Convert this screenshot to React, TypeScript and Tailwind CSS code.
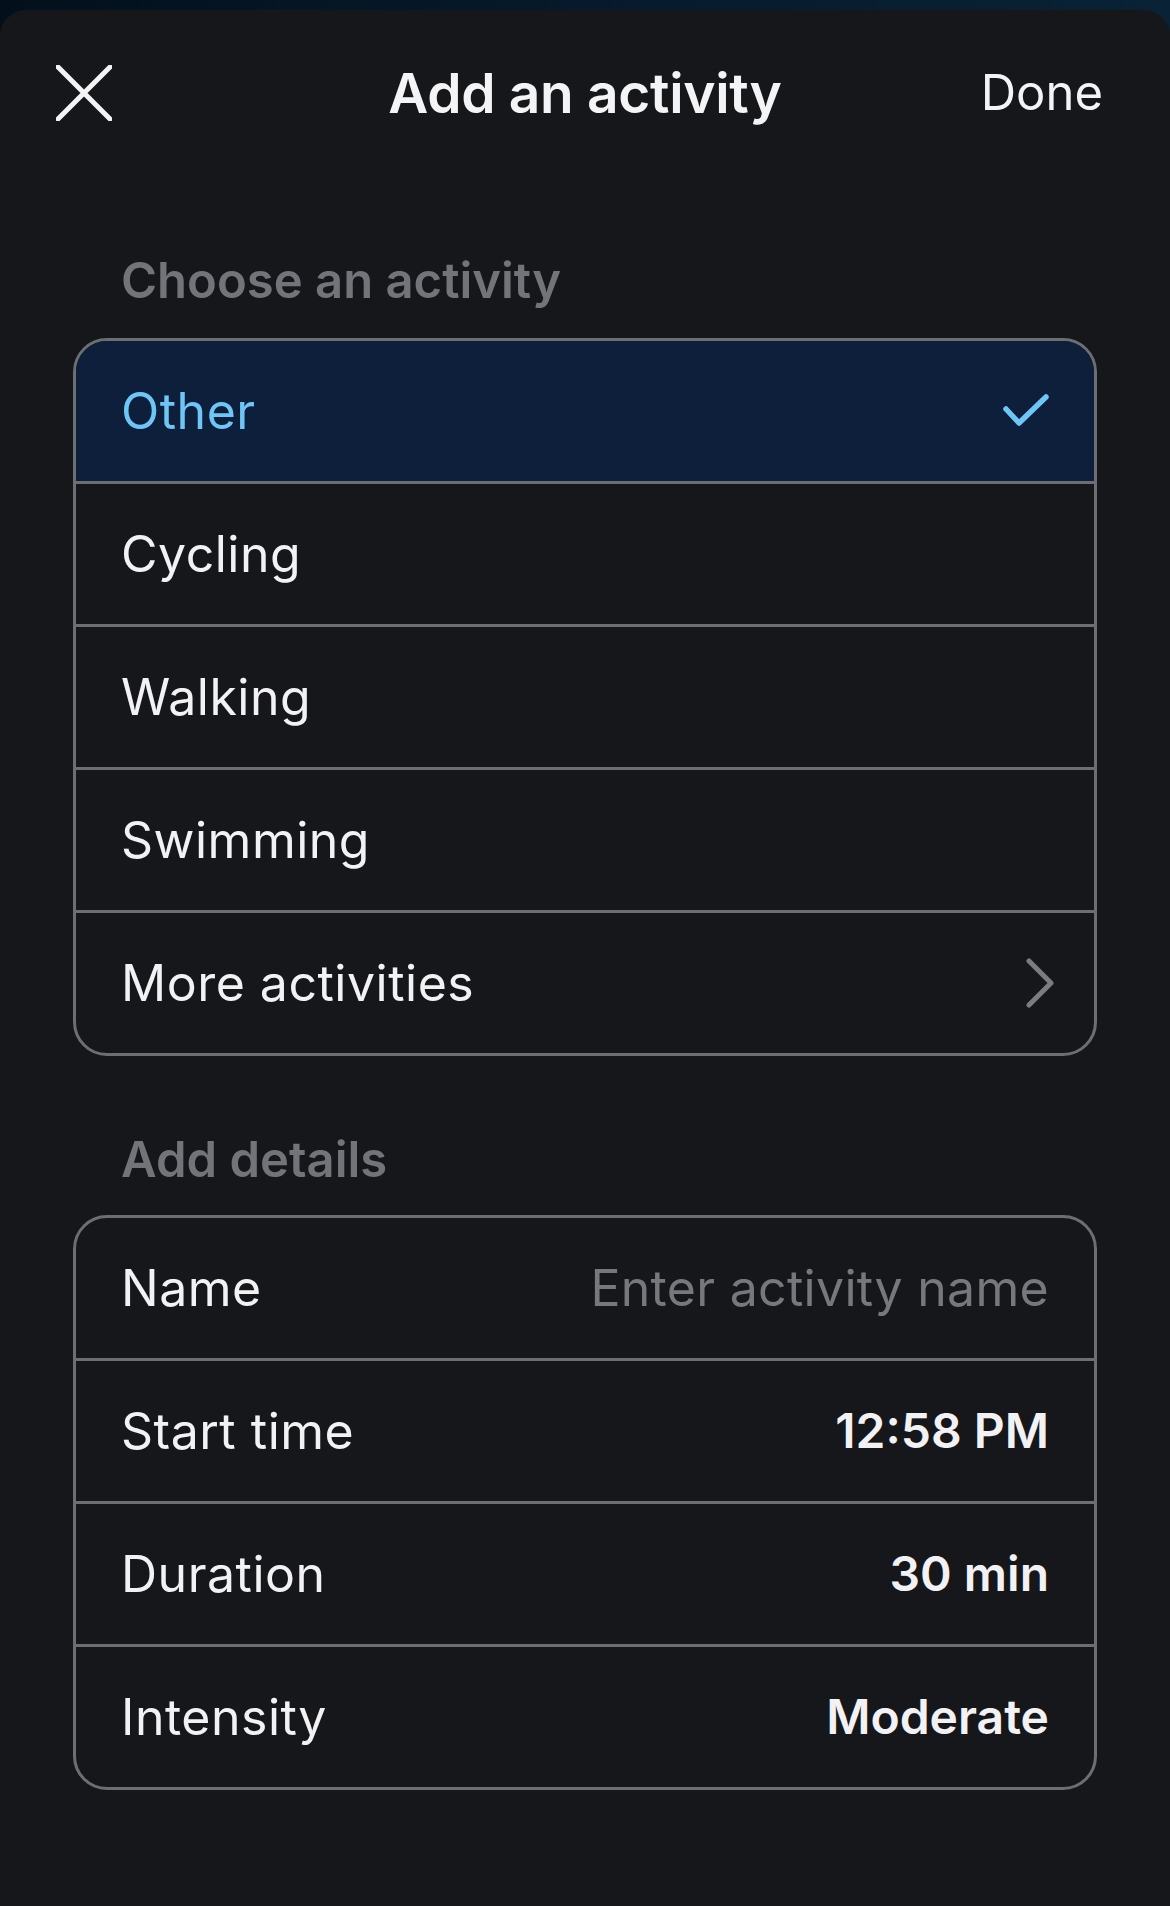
import React from "react";

const font = { fontFamily: "Inter, 'Noto Sans', sans-serif" };

function XIcon() {
  return (
    <svg width="56" height="56" viewBox="0 0 56 56" fill="none">
      <path d="M2 2 L54 54 M54 2 L2 54" stroke="#f4f4f6" strokeWidth="5" strokeLinecap="round" />
    </svg>
  );
}

function Check() {
  return (
    <svg width="46" height="34" viewBox="0 0 46 34" fill="none">
      <path d="M3 15 L16 29 L43 3" stroke="#6ec6f7" strokeWidth="5.5" strokeLinecap="round" strokeLinejoin="round" />
    </svg>
  );
}

function Chevron() {
  return (
    <svg width="30" height="50" viewBox="0 0 30 50" fill="none">
      <path d="M4 3 L26 25 L4 47" stroke="#7b7c81" strokeWidth="5" strokeLinecap="round" strokeLinejoin="round" />
    </svg>
  );
}

function Row({ children, last, selected }: { children: React.ReactNode; last?: boolean; selected?: boolean }) {
  return (
    <div
      className={
        "flex items-center justify-between pl-[45px] pr-[45px] " +
        (last ? "h-[140px] " : "h-[143px] border-b-[3px] border-[#6d6e73] ") +
        (selected ? "bg-[#0e1f3b]" : "")
      }
    >
      {children}
    </div>
  );
}

const label = "text-[50px] tracking-[0.5px] text-[#f2f2f4]";
const value = "text-[48px] font-semibold text-[#f2f2f4]";

export default function App() {
  const activities = ["Cycling", "Walking", "Swimming"];
  return (
    <div
      className="w-[1170px] h-[1906px] pt-[10px] bg-gradient-to-r from-[#03101c] via-[#061a2b] to-[#0a2236]"
      style={font}
    >
      <div className="h-[1896px] rounded-t-[26px] bg-[#16171b] flex flex-col">
        <div className="h-[166px] grid grid-cols-[1fr_auto_1fr] items-center px-[56px]">
          <div className="flex items-center">
            <XIcon />
          </div>
          <div className="text-[55px] font-semibold text-[#f4f4f6] tracking-[-0.3px]">Add an activity</div>
          <div className="flex justify-end pr-[11px] text-[49px] text-[#f4f4f6]">Done</div>
        </div>

        <div className="mt-[75px] pl-[121px] text-[49px] leading-[60px] font-semibold text-[#737479]">
          Choose an activity
        </div>
        <div className="mt-[27px] mx-[73px] rounded-[34px] border-[3px] border-[#6d6e73] overflow-hidden">
          <Row selected>
            <span className="text-[50px] tracking-[0.5px] text-[#6ec6f7]">Other</span>
            <Check />
          </Row>
          {activities.map((a) => (
            <Row key={a}>
              <span className={label}>{a}</span>
            </Row>
          ))}
          <Row last>
            <span className={label}>More activities</span>
            <span className="-mr-[6px]">
              <Chevron />
            </span>
          </Row>
        </div>

        <div className="mt-[74px] pl-[121px] text-[49px] leading-[60px] font-semibold text-[#737479]">
          Add details
        </div>
        <div className="mt-[25px] mx-[73px] rounded-[34px] border-[3px] border-[#6d6e73] overflow-hidden">
          <Row>
            <span className={label}>Name</span>
            <span className="text-[50px] tracking-[0.3px] text-[#77787d]">Enter activity name</span>
          </Row>
          <Row>
            <span className={label}>Start time</span>
            <span className={value}>12:58 PM</span>
          </Row>
          <Row>
            <span className={label}>Duration</span>
            <span className={value}>30 min</span>
          </Row>
          <Row last>
            <span className={label}>Intensity</span>
            <span className={value}>Moderate</span>
          </Row>
        </div>
      </div>
    </div>
  );
}
